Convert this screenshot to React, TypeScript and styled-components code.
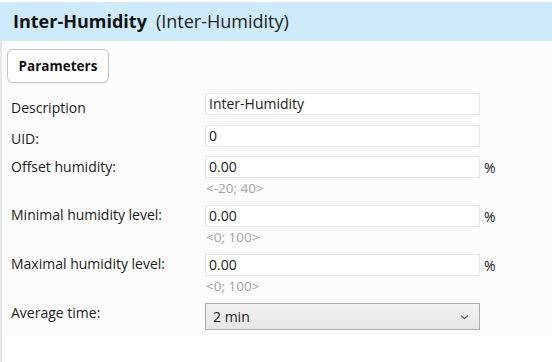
import styled, { createGlobalStyle } from "styled-components"

const Global = createGlobalStyle`
  html, body {
    margin: 0;
    padding: 0;
    background: #ffffff;
  }
  body {
    font-family: "Segoe UI", "Open Sans", "Noto Sans", sans-serif;
    color: #1b1b1b;
  }
`

const Page = styled.div`
  width: 552px;
  height: 362px;
  overflow: hidden;
  display: flex;
  flex-direction: column;
`

const Header = styled.div`
  margin-top: 2px;
  height: 38px;
  background: #cdebfb;
  border-bottom: 1px solid #e2e2e2;
  display: flex;
  align-items: center;
  padding-left: 13px;
  gap: 9px;
`

const Title = styled.span`
  font-size: 18px;
  font-weight: 700;
  color: #111;
`

const SubTitle = styled.span`
  font-size: 18px;
  font-weight: 400;
  color: #222;
`

const Body = styled.div`
  flex: 1;
  border-left: 2px solid #e6e6e6;
  display: flex;
  flex-direction: column;
`

const Panel = styled.div`
  background: #fcfcfc;
  padding: 8px 0 6px 0;
`

const TabButton = styled.button`
  margin-left: 5px;
  width: 102px;
  height: 34px;
  border: 1px solid #c4c4c4;
  border-radius: 6px;
  background: #ffffff;
  font-family: inherit;
  font-size: 13.5px;
  font-weight: 700;
  color: #111;
  box-shadow: 0 1px 1px rgba(0, 0, 0, 0.06);
`

const Form = styled.div`
  display: flex;
  flex-direction: column;
  gap: 9px;
  margin-top: 10px;
`

const Row = styled.div<{ $extra?: number }>`
  display: grid;
  grid-template-columns: 203px 275px auto;
  align-items: start;
  margin-bottom: ${(p) => p.$extra ?? 0}px;
`

const Label = styled.div<{ $shift?: number }>`
  box-sizing: border-box;
  height: 22px;
  padding-left: 9px;
  padding-top: ${(p) => p.$shift ?? 1}px;
  font-size: 14px;
  line-height: 20px;
  white-space: nowrap;
`

const Field = styled.div`
  display: flex;
  flex-direction: column;
`

const Input = styled.div`
  box-sizing: border-box;
  height: 22px;
  border: 1px solid #e8e8e8;
  background: #ffffff;
  padding: 0 3px;
  font-size: 14px;
  line-height: 20px;
`

const Hint = styled.div`
  height: 18px;
  line-height: 21px;
  font-size: 13.5px;
  color: #a3a3a3;
  padding-left: 1px;
`

const Unit = styled.div`
  padding-left: 4px;
  font-size: 14px;
  line-height: 24px;
`

const Select = styled.div`
  box-sizing: border-box;
  height: 27px;
  border: 1px solid #adadad;
  background: linear-gradient(#f2f2f2, #e6e6e6);
  display: flex;
  align-items: center;
  justify-content: space-between;
  padding: 0 10px 0 7px;
  font-size: 14px;
`

const fields = [
  { label: "Offset humidity:", value: "0.00", hint: "<-20; 40>", shift: 1 },
  { label: "Minimal humidity level:", value: "0.00", hint: "<0; 100>", shift: -1 },
  { label: "Maximal humidity level:", value: "0.00", hint: "<0; 100>", shift: -1 },
]

const App = () => {
  return (
    <Page>
      <Global />
      <Header>
        <Title>Inter-Humidity</Title>
        <SubTitle>(Inter-Humidity)</SubTitle>
      </Header>
      <Body>
        <Panel>
          <TabButton>Parameters</TabButton>
          <Form>
            <Row $extra={1}>
              <Label $shift={5}>Description</Label>
              <Input>Inter-Humidity</Input>
            </Row>
            <Row>
              <Label $shift={4}>UID:</Label>
              <Input>0</Input>
            </Row>
            {fields.map((f) => (
              <Row key={f.label}>
                <Label $shift={f.shift}>{f.label}</Label>
                <Field>
                  <Input>{f.value}</Input>
                  <Hint>{f.hint}</Hint>
                </Field>
                <Unit>%</Unit>
              </Row>
            ))}
            <Row>
              <Label $shift={0}>Average time:</Label>
              <Select>
                <span>2 min</span>
                <svg width="9" height="6" viewBox="0 0 9 6">
                  <path d="M1 1.5 L4.5 4.5 L8 1.5" fill="none" stroke="#555" strokeWidth="1.2" />
                </svg>
              </Select>
            </Row>
          </Form>
        </Panel>
      </Body>
    </Page>
  )
}

export default App
